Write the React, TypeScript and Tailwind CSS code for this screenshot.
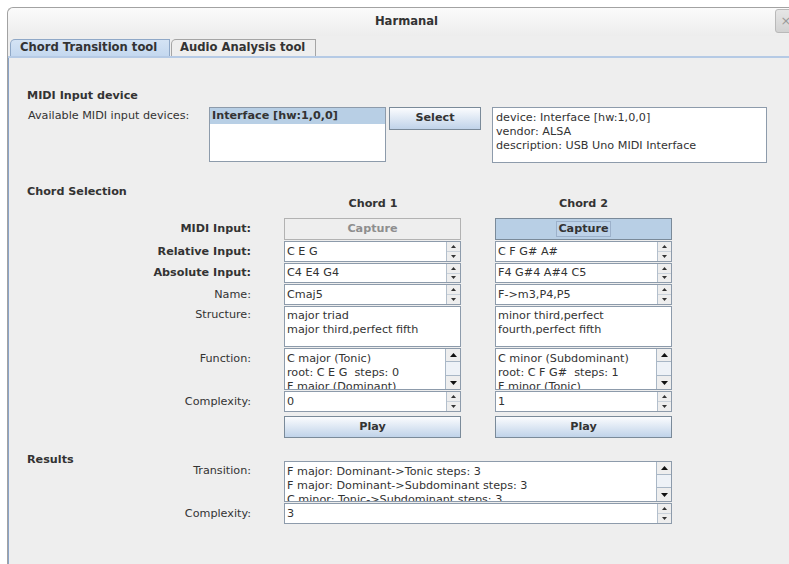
import type { ReactNode } from "react";

const cols = "grid grid-cols-[242px_178px_177px] gap-x-[33px]";

function UpDown() {
    return (
        <div className="flex w-[14px] flex-col border-l border-[#b3bfcc] bg-[#eeeeee]">
            <div className="flex flex-1 items-center justify-center border-b border-[#c9d1da]">
                <svg width="5" height="3" viewBox="0 0 5 3">
                    <path d="M2.5 0L5 3H0z" fill="#333" />
                </svg>
            </div>
            <div className="flex flex-1 items-center justify-center">
                <svg width="5" height="3" viewBox="0 0 5 3">
                    <path d="M0 0H5L2.5 3z" fill="#333" />
                </svg>
            </div>
        </div>
    );
}

function Spinner({ value }: { value: string }) {
    return (
        <div className="flex h-full border border-[#8d9bab] bg-white">
            <div className="flex flex-1 items-center px-[2px] leading-[14px]">{value}</div>
            <UpDown />
        </div>
    );
}

function ScrollBar() {
    return (
        <div className="flex w-[15px] flex-col border-l border-[#a9b7c6] bg-[#eeeeee]">
            <div className="flex h-[13px] items-center justify-center border-b border-[#a9b7c6]">
                <svg width="7" height="4" viewBox="0 0 7 4">
                    <path d="M3.5 0L7 4H0z" fill="#111" />
                </svg>
            </div>
            <div className="flex-1 border-b border-[#a9b7c6] bg-[#eef2f7]" />
            <div className="flex h-[13px] items-center justify-center">
                <svg width="7" height="4" viewBox="0 0 7 4">
                    <path d="M0 0H7L3.5 4z" fill="#111" />
                </svg>
            </div>
        </div>
    );
}

function ScrollText({ lines }: { lines: string[] }) {
    return (
        <div className="flex h-full border border-[#8d9bab] bg-white">
            <div className="flex-1 overflow-hidden px-[2px] pt-[3px] leading-[14px]">
                {lines.map((l) => (
                    <div key={l} className="whitespace-pre">{l}</div>
                ))}
            </div>
            <ScrollBar />
        </div>
    );
}

function Label({ children, bold, top }: { children: ReactNode; bold?: boolean; top?: string }) {
    return (
        <div
            className={`flex justify-end leading-[14px] ${top ? `items-start ${top}` : "items-center"} ${
                bold ? "font-bold" : ""
            }`}
        >
            {children}
        </div>
    );
}

function BlueButton({ children }: { children: ReactNode }) {
    return (
        <div className="flex h-full items-center justify-center border border-[#7a8a99] bg-gradient-to-b from-[#fbfcfe] to-[#c0d3e9] font-bold">
            {children}
        </div>
    );
}

export default function App() {
    return (
        <div className="h-[564px] w-[789px] overflow-hidden bg-white font-['DejaVu_Sans',sans-serif] text-[11.2px] text-[#333333]">
            <div className="ml-[7px] mt-[7px] flex h-[557px] w-[798px] flex-col rounded-tl-[6px] border-l border-t border-[#a2a2a2] bg-[#eeeeee]">
                {/* title bar */}
                <div className="relative flex h-[28px] items-center justify-center rounded-tl-[6px] bg-gradient-to-b from-[#fbfbfb] to-[#ededed]">
                    <span className="text-[11.6px] font-bold">Harmanal</span>
                    <div className="absolute right-[8px] top-[1px] flex h-[24px] w-[22px] items-center justify-center rounded-[3px] border border-[#b9b9b9] bg-gradient-to-b from-[#e6e6e6] to-[#d2d2d2] text-[13px] text-[#9a9a9a]">
                        ×
                    </div>
                </div>

                {/* tabs */}
                <div className="flex h-[20px] items-end pl-[2px] text-[11.6px] font-bold">
                    <div className="flex h-[17px] w-[160px] items-center rounded-tl-[5px] border-l border-r border-t border-[#8fa8c7] bg-gradient-to-b from-[#d4e3f4] to-[#c4d8ef] pl-[9px]">
                        Chord Transition tool
                    </div>
                    <div className="ml-[1px] flex h-[17px] w-[145px] items-center rounded-tl-[5px] border-l border-r border-t border-[#a5a5a5] bg-[#eeeeee] pl-[8px]">
                        Audio Analysis tool
                    </div>
                </div>
                <div className="h-[2px] bg-[#b5cae5]" />

                {/* tab content */}
                <div className="flex-1 border-l border-[#8aa3c6]">
                    {/* MIDI input device */}
                    <div className="mt-[31px] pl-[18px] font-bold leading-[14px]">MIDI Input device</div>
                    <div className="mt-[4px] flex items-start pl-[19px]">
                        <div className="w-[181px] pt-[2px] leading-[14px]">Available MIDI input devices:</div>
                        <div className="h-[55px] w-[177px] border border-[#8d9bab] bg-white">
                            <div className="h-[16px] bg-[#b8cfe5] pl-[2px] font-bold leading-[16px]">Interface [hw:1,0,0]</div>
                        </div>
                        <div className="ml-[3px] h-[23px] w-[92px]">
                            <BlueButton>Select</BlueButton>
                        </div>
                        <div className="ml-[11px] h-[56px] w-[275px] border border-[#8d9bab] bg-white pl-[3px] pt-[3px] leading-[14px]">
                            <div>device: Interface [hw:1,0,0]</div>
                            <div>vendor: ALSA</div>
                            <div>description: USB Uno MIDI Interface</div>
                        </div>
                    </div>

                    {/* chord selection */}
                    <div className="mt-[22px] h-[12px] pl-[18px] font-bold leading-[14px]">Chord Selection</div>
                    <div className={`${cols} h-[14px] font-bold leading-[14px]`}>
                        <div />
                        <div className="text-center">Chord 1</div>
                        <div className="text-center">Chord 2</div>
                    </div>
                    <div className={`${cols} mt-[7px] grid-rows-[22px_21px_20px_21px_41px_42px_21px_25px] gap-y-[1px]`}>
                        <Label bold>MIDI Input:</Label>
                        <div className="flex w-[177px] items-center justify-center border border-[#b2b2b2] bg-[#eeeeee] font-bold text-[#8e8e8e]">
                            Capture
                        </div>
                        <div className="flex items-center justify-center border border-[#7a8a99] bg-[#b8cfe5] font-bold">
                            <span className="border border-[#9cb1ca] bg-[#bdd2e8] px-[1px] leading-[14px]">Capture</span>
                        </div>

                        <Label bold>Relative Input:</Label>
                        <div className="w-[177px]"><Spinner value="C E G" /></div>
                        <Spinner value="C F G# A#" />

                        <Label bold>Absolute Input:</Label>
                        <div className="w-[177px]"><Spinner value="C4 E4 G4" /></div>
                        <Spinner value="F4 G#4 A#4 C5" />

                        <Label>Name:</Label>
                        <div className="w-[177px]"><Spinner value="Cmaj5" /></div>
                        <Spinner value="F->m3,P4,P5" />

                        <Label top="pt-[2px]">Structure:</Label>
                        <div className="w-[177px] border border-[#8d9bab] bg-white px-[2px] pt-[2px] leading-[14px]">
                            <div>major triad</div>
                            <div>major third,perfect fifth</div>
                        </div>
                        <div className="border border-[#8d9bab] bg-white px-[2px] pt-[2px] leading-[14px]">
                            <div>minor third,perfect</div>
                            <div>fourth,perfect fifth</div>
                        </div>

                        <Label top="pt-[4px]">Function:</Label>
                        <div className="w-[177px]">
                            <ScrollText lines={["C major (Tonic)", "root: C E G  steps: 0", "F major (Dominant)"]} />
                        </div>
                        <ScrollText lines={["C minor (Subdominant)", "root: C F G#  steps: 1", "F minor (Tonic)"]} />

                        <Label>Complexity:</Label>
                        <div className="w-[177px]"><Spinner value="0" /></div>
                        <Spinner value="1" />

                        <div />
                        <div className="mt-[3px] h-[22px] w-[177px]"><BlueButton>Play</BlueButton></div>
                        <div className="mt-[3px] h-[22px]"><BlueButton>Play</BlueButton></div>
                    </div>

                    {/* results */}
                    <div className="mt-[15px] h-[8px] pl-[18px] font-bold leading-[14px]">Results</div>
                    <div className={`${cols} grid-rows-[41px_21px] gap-y-[1px]`}>
                        <Label top="pt-[3px]">Transition:</Label>
                        <div className="col-span-2 w-[388px]">
                            <ScrollText
                                lines={[
                                    "F major: Dominant->Tonic steps: 3",
                                    "F major: Dominant->Subdominant steps: 3",
                                    "C minor: Tonic->Subdominant steps: 3",
                                ]}
                            />
                        </div>
                        <Label>Complexity:</Label>
                        <div className="col-span-2 w-[388px]"><Spinner value="3" /></div>
                    </div>
                </div>
            </div>
        </div>
    );
}
